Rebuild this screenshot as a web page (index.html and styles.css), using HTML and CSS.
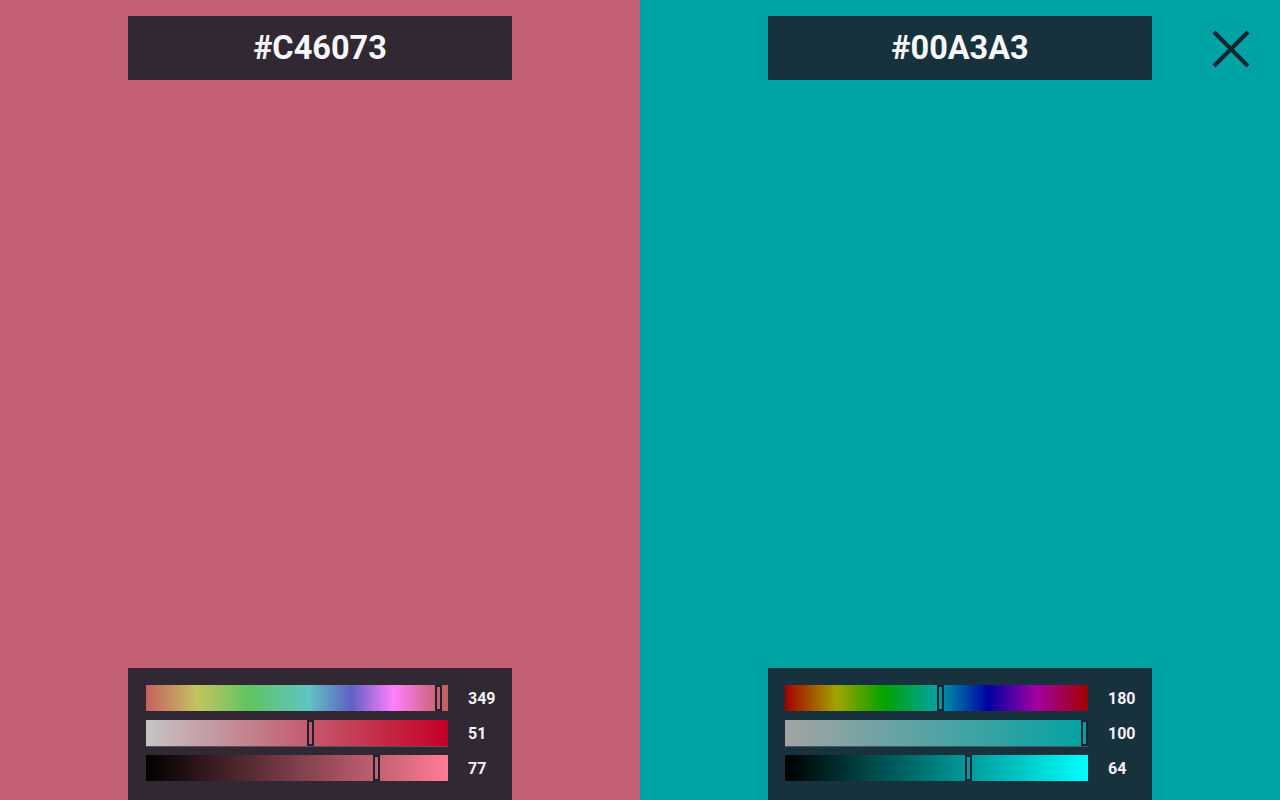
FILE: index.html
```html
<!DOCTYPE html>
<html lang="en">
<head>
<meta charset="utf-8">
<title>Colour compare</title>
<link rel="stylesheet" href="styles.css">
</head>
<body>
<main class="app">
  <section class="pane pane-a">
    <h1 class="hex">#C46073</h1>
    <div class="controls">
      <div class="row">
        <div class="track hue-a"><span class="thumb" style="left:289px"></span></div>
        <span class="val">349</span>
      </div>
      <div class="row">
        <div class="track sat sat-a"><span class="thumb" style="left:161px"></span></div>
        <span class="val">51</span>
      </div>
      <div class="row">
        <div class="track val-a"><span class="thumb" style="left:227px"></span></div>
        <span class="val">77</span>
      </div>
    </div>
  </section>
  <section class="pane pane-b">
    <h1 class="hex">#00A3A3</h1>
    <div class="controls">
      <div class="row">
        <div class="track hue-b"><span class="thumb" style="left:152px"></span></div>
        <span class="val">180</span>
      </div>
      <div class="row">
        <div class="track sat sat-b"><span class="thumb" style="left:296px"></span></div>
        <span class="val">100</span>
      </div>
      <div class="row">
        <div class="track val-b"><span class="thumb" style="left:180px"></span></div>
        <span class="val">64</span>
      </div>
    </div>
  </section>
  <button class="close" aria-label="Close">
    <svg width="40" height="40" viewBox="0 0 40 40">
      <path d="M3 3 L37 37 M37 3 L3 37" stroke="#17232e" stroke-width="4" fill="none"/>
    </svg>
  </button>
</main>
</body>
</html>
```

FILE: styles.css
```css
* { box-sizing: border-box; }
html, body {
  margin: 0;
  padding: 0;
  width: 1280px;
  height: 800px;
  overflow: hidden;
  font-family: Roboto, "Liberation Sans", sans-serif;
}
.app {
  position: relative;
  display: flex;
  width: 1280px;
  height: 800px;
}
.pane {
  width: 640px;
  height: 800px;
  display: flex;
  flex-direction: column;
  align-items: center;
}
.pane-a { background: #c46073; }
.pane-b { background: #00a3a3; }
.pane-a .hex, .pane-a .controls { background: #312834; }
.pane-b .hex, .pane-b .controls { background: #17313d; }

.hex {
  margin: 16px 0 0;
  width: 384px;
  height: 64px;
  display: flex;
  align-items: center;
  justify-content: center;
  font-size: 32.5px;
  font-weight: 700;
  color: #f5f7fa;
  letter-spacing: 0;
}
.controls {
  margin-top: auto;
  width: 384px;
  height: 132px;
  padding: 17px 0 0 17px;
  display: flex;
  flex-direction: column;
  gap: 9px;
}
.pane-a .controls { padding-left: 18px; }
.row {
  display: grid;
  grid-template-columns: 303px 44px;
  grid-template-rows: 26px;
  column-gap: 20px;
  height: 26px;
}
.pane-a .row { grid-template-columns: 302px 44px; }
.track {
  position: relative;
  height: 26px;
}
.sat { box-shadow: 0 1px 0 rgba(255, 255, 255, 0.2); }
.thumb {
  position: absolute;
  top: 0;
  width: 7px;
  height: 26px;
  border: 2px solid #1c2230;
}
.val {
  align-self: start;
  font-size: 16px;
  font-weight: 700;
  color: #f2f2f7;
  line-height: 28px;
}
.hue-a {
  background: linear-gradient(to right, #c46060 0%, #c4c460 17%, #60c460 34%, #60c4c4 54%, #6060c4 68%, #ff80ff 82%, #c46060 98%, #c46060 100%);
}
.sat-a { background: linear-gradient(to right, #c4c4c4, #c40025); }
.val-a { background: linear-gradient(to right, #000000, #ff7d96); }
.hue-b {
  background: linear-gradient(to right, #a30000 0%, #a3a300 17%, #00a300 33%, #00a3a3 50%, #0000a3 67%, #a300a3 83%, #a30000 100%);
}
.sat-b { background: linear-gradient(to right, #a3a3a3, #00a3a3); }
.val-b { background: linear-gradient(to right, #000000, #00ffff); }

.close {
  position: absolute;
  left: 1211px;
  top: 29px;
  width: 40px;
  height: 40px;
  padding: 0;
  border: 0;
  background: transparent;
  cursor: pointer;
}
.close svg { display: block; }
```
